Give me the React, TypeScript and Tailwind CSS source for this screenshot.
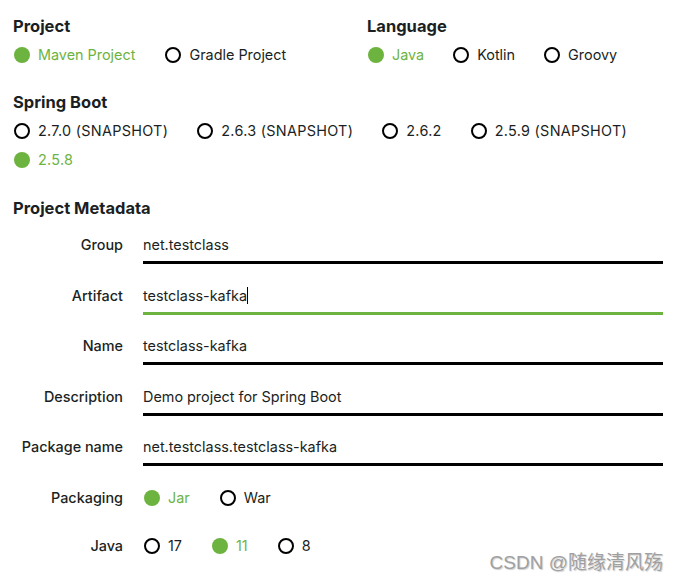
import React from "react";

function Radio({ label, checked }: { label: string; checked?: boolean }) {
  return (
    <div className="flex items-center h-6 gap-2">
      {checked ? (
        <span className="w-4 h-4 rounded-full bg-[#6db33f] shrink-0" />
      ) : (
        <span className="w-4 h-4 rounded-full border-2 border-black shrink-0" />
      )}
      <span className={checked ? "text-[#6db33f]" : "text-[#1b1f23]"}>{label}</span>
    </div>
  );
}

function Field({ label, value, active, caret }: { label: string; value: string; active?: boolean; caret?: boolean }) {
  return (
    <>
      <div className="text-right font-medium leading-5 pt-px text-[#1b1f23]">{label}</div>
      <div
        className={
          "leading-5 pt-px pb-[6px] border-b-[3px] text-[#1b1f23] " +
          (active ? "border-[#6db33f]" : "border-black")
        }
      >
        {value}
        {caret && <span className="inline-block w-px h-[17px] bg-black align-middle -mt-[2px]" />}
      </div>
    </>
  );
}

export default function App() {
  return (
    <div
      className="relative w-[676px] h-[581px] bg-white overflow-hidden text-[14.4px] text-[#1b1f23]"
      style={{ fontFamily: "Inter, 'Noto Sans', sans-serif" }}
    >
      <div className="pl-[13px] pt-4">
        <div className="flex">
          <div className="w-[354px]">
            <div className="font-bold text-[16.5px] leading-5">Project</div>
            <div className="flex gap-[30px] mt-[7px] pl-px">
              <Radio label="Maven Project" checked />
              <Radio label="Gradle Project" />
            </div>
          </div>
          <div>
            <div className="font-bold text-[16.5px] leading-5">Language</div>
            <div className="flex gap-[29px] mt-[7px] pl-px">
              <Radio label="Java" checked />
              <Radio label="Kotlin" />
              <Radio label="Groovy" />
            </div>
          </div>
        </div>

        <div className="mt-[25px] font-bold text-[16.5px] leading-5">Spring Boot</div>
        <div className="flex flex-wrap gap-x-[29px] gap-y-[5px] mt-[7px] pl-px w-[640px] tracking-[0.3px]">
          <Radio label="2.7.0 (SNAPSHOT)" />
          <Radio label="2.6.3 (SNAPSHOT)" />
          <Radio label="2.6.2" />
          <Radio label="2.5.9 (SNAPSHOT)" />
          <Radio label="2.5.8" checked />
        </div>

        <div className="mt-[26px] font-bold text-[16.5px] leading-5">Project Metadata</div>

        <div className="grid grid-cols-[110px_520px] gap-x-5 gap-y-[20.5px] mt-4">
          <Field label="Group" value="net.testclass" />
          <Field label="Artifact" value="testclass-kafka" active caret />
          <Field label="Name" value="testclass-kafka" />
          <Field label="Description" value="Demo project for Spring Boot" />
          <Field label="Package name" value="net.testclass.testclass-kafka" />
        </div>

        <div className="grid grid-cols-[110px_520px] gap-x-5 gap-y-6 mt-5 items-center">
          <div className="text-right font-medium">Packaging</div>
          <div className="flex gap-[30px] pl-px">
            <Radio label="Jar" checked />
            <Radio label="War" />
          </div>
          <div className="text-right font-medium">Java</div>
          <div className="flex gap-[30px] pl-px">
            <Radio label="17" />
            <Radio label="11" checked />
            <Radio label="8" />
          </div>
        </div>
      </div>

      <div
        className="absolute right-[13px] bottom-[6px] text-[19px] leading-6 text-[#a0a0a0]"
        style={{ fontFamily: "'Liberation Sans', 'Noto Sans CJK SC', sans-serif", textShadow: "1px 1px 1px #d0d0d0" }}
      >
        CSDN @随缘清风殇
      </div>
    </div>
  );
}
